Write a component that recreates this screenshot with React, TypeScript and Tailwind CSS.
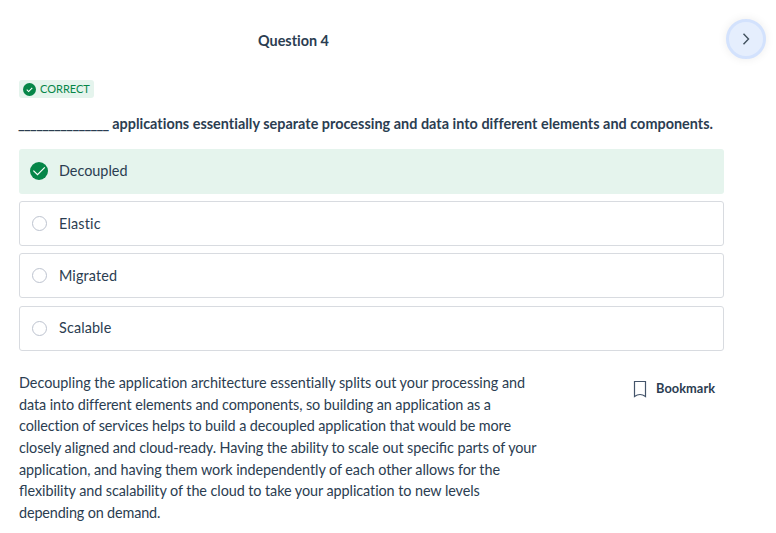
import React from "react";

const options = [
  { label: "Elastic", style: "ml-3 tracking-[0.17px]" },
  { label: "Migrated", style: "-mt-px ml-3 tracking-[0.12px]" },
  { label: "Scalable", style: "-mt-px ml-3 tracking-[0.12px]" },
];

function Check({ size, path, width }: { size: number; path: string; width: number }) {
  return (
    <svg width={size} height={size} viewBox="0 0 18 18" fill="none">
      <circle cx="9" cy="9" r="9" fill="#058648" />
      <path d={path} stroke="#fff" strokeWidth={width} />
    </svg>
  );
}

function Joined({ children }: { children: string }) {
  return <span className="tracking-normal [font-variant-ligatures:common-ligatures]">{children}</span>;
}

export default function App() {
  return (
    <main className="h-[533px] w-[776px] overflow-hidden bg-white pl-[19px] font-['Lato',sans-serif] text-[#2b3d51] [font-variant-ligatures:none]">
      <header className="flex h-[80px] items-start justify-between pr-[10px]">
        <h1 className="ml-[239px] mt-[31px] text-[14.4px] font-bold leading-[20px]">Question 4</h1>
        <button className="mt-[19px] flex size-10 items-center justify-center rounded-full border-[3px] border-[#d3e2fd] bg-[#e5eefd] shadow-[0_0_10px_rgba(0,0,0,0.08)]">
          <svg width="16" height="16" viewBox="0 0 16 16" fill="none" stroke="#43525f" strokeWidth="1.4">
            <path d="M5.5 2.7l5 5.3-5 5.3" />
          </svg>
        </button>
      </header>
      <div className="flex h-[18px] w-[75px] items-center gap-1 rounded-[3px] bg-[#e5f4ed] pl-1 text-[11px] text-[#058648]">
        <Check size={13} width={1.5} path="M5.2 9.2l2.6 2.6 5-5" />
        <span>CORRECT</span>
      </div>
      <p className="mt-[15px] whitespace-nowrap text-[14.4px] font-bold leading-[22px]">
        <span className="-ml-px tracking-[-0.67px]">_______________</span>{" "}
        <span className="tracking-[0.024px]">
          applications essentially separate processing and data into different elements and components.
        </span>
      </p>
      <div className="mt-[14px] flex w-[705px] flex-col text-[14.4px]">
        <div className="flex h-[45px] items-center rounded-[3px] bg-[#e5f4ed] pl-[11px]">
          <span className="-mt-px">
            <Check size={18} width={1.2} path="M3.4 8.6l4.1 4.1 7.3-7.3" />
          </span>
          <span className="-mt-[2px] ml-[11px]">Decoupled</span>
        </div>
        <div className="mt-[7px] flex flex-col gap-[7.4px]">
          {options.map((o) => (
            <div key={o.label} className="flex h-[45px] items-center rounded-[3px] border border-[#d8dbe0] pl-3">
              <span className="size-[15px] rounded-full border border-[#bdc3cf]" />
              <span className={o.style}>{o.label}</span>
            </div>
          ))}
        </div>
      </div>
      <div className="mt-[21.4px] flex">
        <div className="w-[614px] whitespace-nowrap text-[14.4px] leading-[21.6px]">
          <p className="tracking-[-0.018px]">Decoupling the application architecture essentially splits out your processing and</p>
          <p className="tracking-[-0.08px]">data into different elements and components, so building an application as a</p>
          <p className="tracking-[-0.1px]">collection of services helps to build a decoupled application that would be more</p>
          <p className="tracking-[-0.098px]">
            closely aligned and cloud-ready. Having the ability to scale out speci<Joined>fi</Joined>c parts of your
          </p>
          <p className="tracking-[-0.066px]">application, and having them work independently of each other allows for the</p>
          <p className="tracking-[-0.07px]">
            <Joined>fl</Joined>exibility and scalability of the cloud to take your application to new levels
          </p>
          <p className="tracking-[-0.14px]">depending on demand.</p>
        </div>
        <button className="mt-[6.6px] flex h-[20px] items-center gap-[9px] text-[12.8px] font-bold tracking-[0.05px]">
          <svg width="14" height="18" viewBox="0 0 14 18" fill="none" stroke="#44546a" strokeWidth="1.2">
            <path d="M1.5 1.5h11v15Q7 12.5 1.5 16.5z" />
          </svg>
          Bookmark
        </button>
      </div>
    </main>
  );
}
